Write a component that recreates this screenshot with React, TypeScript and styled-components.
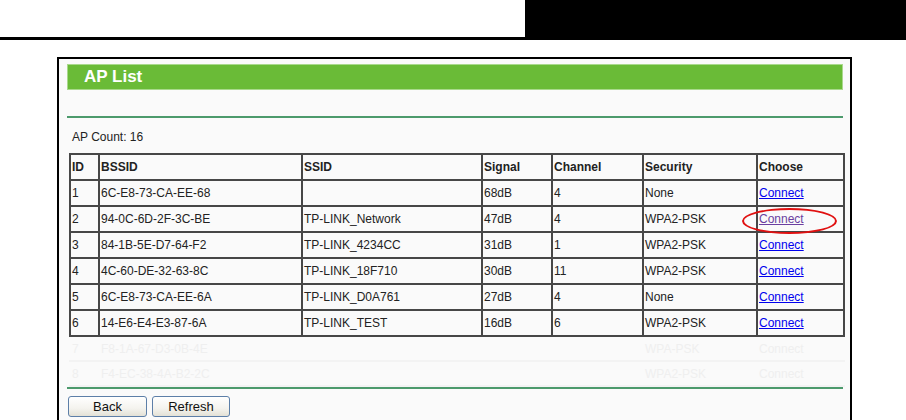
import React from "react";
import styled, { createGlobalStyle } from "styled-components";

const Global = createGlobalStyle`
  html, body { margin: 0; padding: 0; background: #ffffff; }
  body { font-family: "Liberation Sans", Arial, sans-serif; overflow: hidden; }
`;

const Page = styled.div`
  width: 906px;
  height: 420px;
  overflow: hidden;
`;

const TopBar = styled.div`
  display: flex;
  height: 40px;
`;

const TopLeft = styled.div`
  width: 525px;
  box-sizing: border-box;
  border-bottom: 3px solid #000;
`;

const TopRight = styled.div`
  flex: 1;
  background: #000;
`;

const Frame = styled.div`
  margin: 17px 0 0 57px;
  width: 795px;
  height: 380px;
  box-sizing: border-box;
  border: 2px solid #000;
  background: #fafafa;
  padding: 5px 7px 0 8px;
`;

const TitleBar = styled.div`
  height: 26px;
  box-sizing: border-box;
  border: 1px solid #a9d98c;
  background: #6abb37;
  color: #fff;
  font-weight: bold;
  font-size: 17px;
  line-height: 24px;
  padding-left: 16px;
`;

const GreenRule = styled.div<{ $top: number }>`
  margin-top: ${(p) => p.$top}px;
  height: 2px;
  background: #4c9a6c;
`;

const CountLine = styled.div`
  margin-top: 12px;
  padding-left: 5px;
  font-size: 12px;
  line-height: 14px;
  color: #222;
`;

const Table = styled.table`
  margin: 9px 0 0 2px;
  width: 774px;
  border-collapse: collapse;
  table-layout: fixed;
  font-size: 12px;
  color: #222;
`;

const Cell = styled.td<{ $head?: boolean }>`
  height: 24px;
  border: 2px solid #474747;
  padding: 0 1px;
  font-weight: ${(p) => (p.$head ? "bold" : "normal")};
  white-space: nowrap;
  position: relative;
  text-align: left;
`;

const GhostCell = styled.td`
  height: 23px;
  border: 2px solid transparent;
  border-bottom-color: #f3f3f3;
  padding: 0 1px;
  color: #efefef;
  white-space: nowrap;
`;

const Link = styled.a<{ $visited?: boolean }>`
  color: ${(p) => (p.$visited ? "#6b3fa0" : "#0000ee")};
  text-decoration: underline;
  cursor: pointer;
`;

const Mark = styled.span`
  position: absolute;
  left: -16px;
  top: 1px;
  width: 91px;
  height: 22px;
  border: 2px solid #e01010;
  border-radius: 50%;
  pointer-events: none;
`;

const ButtonRow = styled.div`
  display: flex;
  gap: 5px;
  margin-top: 7px;
  padding-left: 1px;
`;

const Button = styled.button<{ $w: number }>`
  width: ${(p) => p.$w}px;
  height: 21px;
  box-sizing: border-box;
  border: 1px solid #5d7fa8;
  border-radius: 3px;
  background: linear-gradient(#ffffff, #f4f3ee 60%, #e3e1d6);
  font-family: "Liberation Sans", Arial, sans-serif;
  font-size: 13px;
  color: #111;
  padding: 0;
  line-height: 19px;
`;

const cols = [29, 203, 180, 70, 91, 114, 87];

const rows = [
  ["1", "6C-E8-73-CA-EE-68", "", "68dB", "4", "None"],
  ["2", "94-0C-6D-2F-3C-BE", "TP-LINK_Network", "47dB", "4", "WPA2-PSK"],
  ["3", "84-1B-5E-D7-64-F2", "TP-LINK_4234CC", "31dB", "1", "WPA2-PSK"],
  ["4", "4C-60-DE-32-63-8C", "TP-LINK_18F710", "30dB", "11", "WPA2-PSK"],
  ["5", "6C-E8-73-CA-EE-6A", "TP-LINK_D0A761", "27dB", "4", "None"],
  ["6", "14-E6-E4-E3-87-6A", "TP-LINK_TEST", "16dB", "6", "WPA2-PSK"],
];

const ghosts = [
  ["7", "F8-1A-67-D3-0B-4E", "", "", "", "WPA-PSK", "Connect"],
  ["8", "F4-EC-38-4A-B2-2C", "", "", "", "WPA2-PSK", "Connect"],
];

export default function App() {
  return (
    <Page>
      <Global />
      <TopBar>
        <TopLeft />
        <TopRight />
      </TopBar>
      <Frame>
        <TitleBar>AP List</TitleBar>
        <GreenRule $top={26} />
        <CountLine>AP Count: 16</CountLine>
        <Table>
          <colgroup>
            {cols.map((w, i) => (
              <col key={i} style={{ width: w }} />
            ))}
          </colgroup>
          <thead>
            <tr>
              {["ID", "BSSID", "SSID", "Signal", "Channel", "Security", "Choose"].map((h) => (
                <Cell as="th" $head key={h}>
                  {h}
                </Cell>
              ))}
            </tr>
          </thead>
          <tbody>
            {rows.map((r, i) => (
              <tr key={r[0]}>
                {r.map((c, j) => (
                  <Cell key={j}>{c}</Cell>
                ))}
                <Cell>
                  <Link $visited={i === 1}>Connect</Link>
                  {i === 1 && <Mark />}
                </Cell>
              </tr>
            ))}
            {ghosts.map((r) => (
              <tr key={r[0]}>
                {r.map((c, j) => (
                  <GhostCell key={j}>{c}</GhostCell>
                ))}
              </tr>
            ))}
          </tbody>
        </Table>
        <GreenRule $top={0} />
        <ButtonRow>
          <Button $w={79}>Back</Button>
          <Button $w={78}>Refresh</Button>
        </ButtonRow>
      </Frame>
    </Page>
  );
}
